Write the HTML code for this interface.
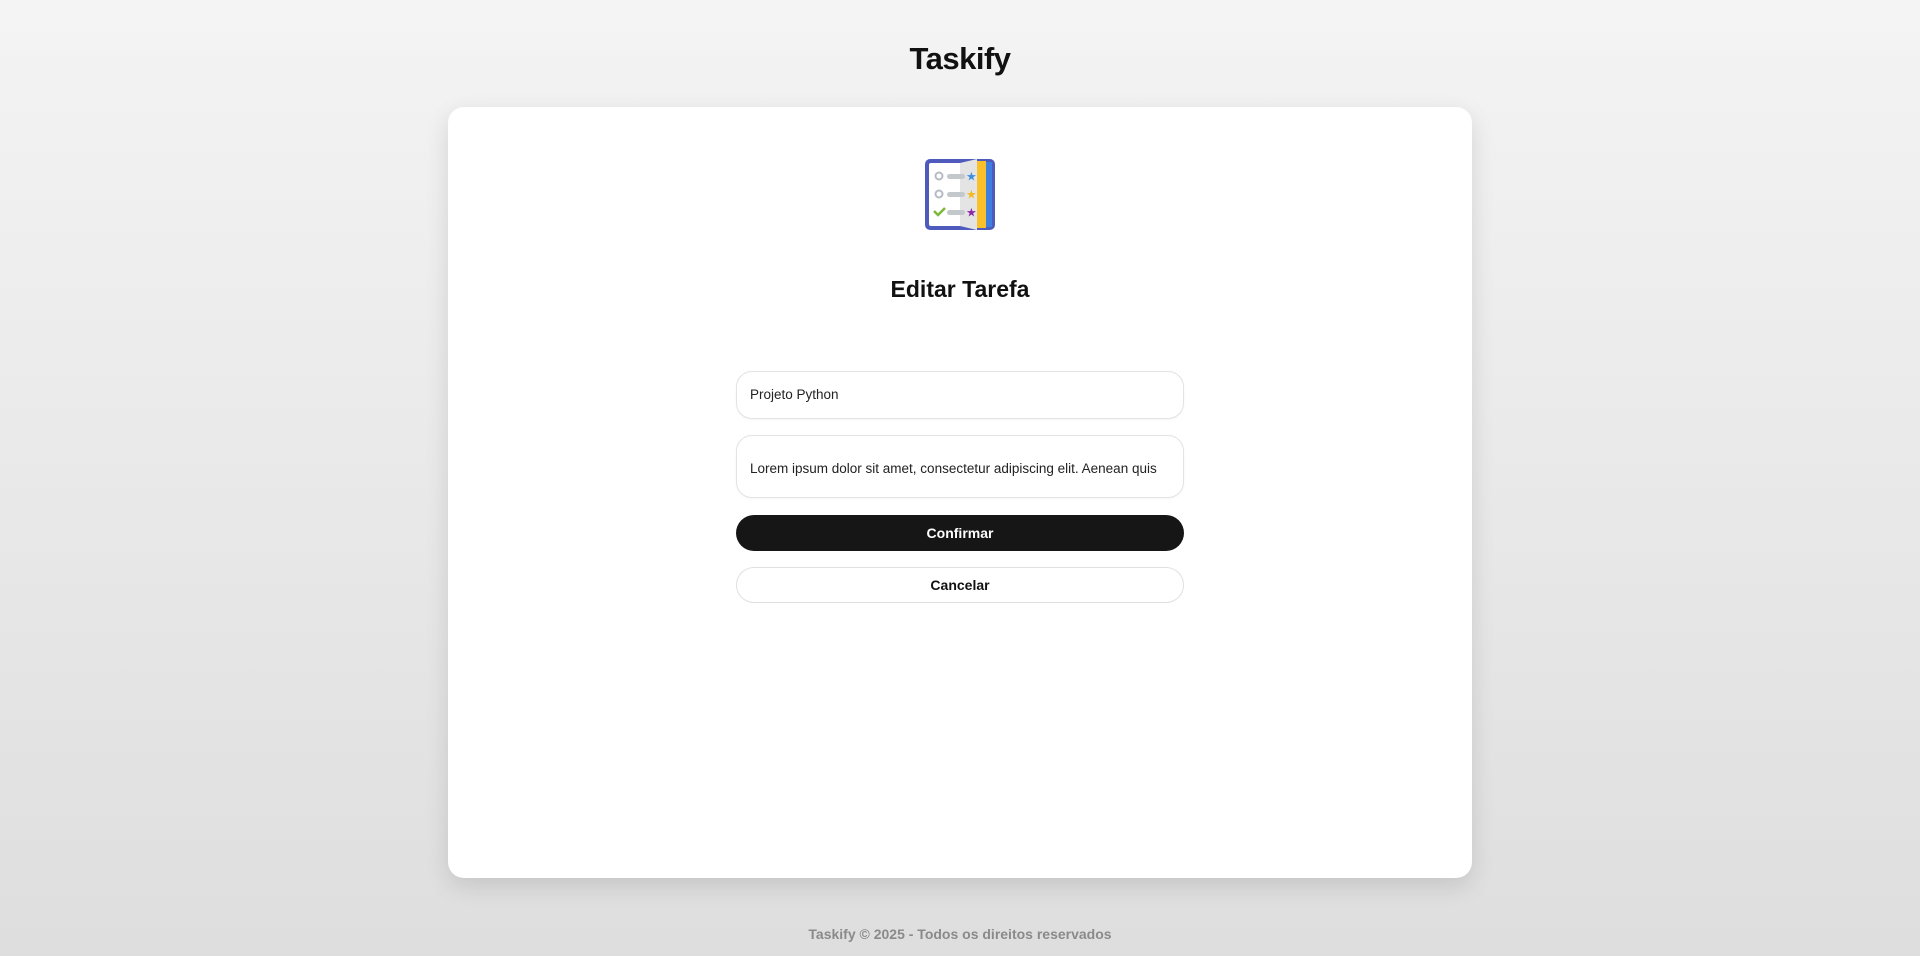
<!DOCTYPE html>
<html><head><meta charset="utf-8"><style>
html,body{margin:0;height:956px;overflow:hidden}
body{background:linear-gradient(#f4f4f4,#dedede);font-family:"Liberation Sans",sans-serif;position:relative;width:1920px}
.title{position:absolute;top:41px;left:0;width:1920px;text-align:center;font-size:31px;font-weight:bold;color:#111;letter-spacing:-0.5px}
.card{position:absolute;left:448px;top:107px;width:1024px;height:771px;background:#fff;border-radius:16px;box-shadow:0 8px 24px rgba(0,0,0,.12)}
.h{position:absolute;top:276px;left:0;width:1920px;text-align:center;font-size:23px;font-weight:bold;color:#111}
.in{position:absolute;left:736px;width:448px;box-sizing:border-box;border:1px solid #e3e3e3;border-radius:16px;background:#fff;font-size:13.5px;color:#222;padding-left:13px;box-shadow:0 1px 2px rgba(0,0,0,.04)}
.btn{position:absolute;left:736px;width:448px;height:36px;box-sizing:border-box;border-radius:18px;text-align:center;line-height:36px;font-size:14px;font-weight:bold}
.foot{position:absolute;top:926px;left:0;width:1920px;text-align:center;font-size:14px;font-weight:bold;color:#8a8a8a}
</style></head><body>
<div class="title">Taskify</div>
<div class="card"></div>
<svg style="position:absolute;left:925px;top:159px" width="70" height="71" viewBox="0 0 70 71">
<rect x="0" y="0" width="70" height="71" rx="5" fill="#4e5bbd"/>
<rect x="4" y="4" width="54" height="63" rx="2" fill="#fff"/>
<path d="M35 4 L52 0 L52 71 L35 67 Z" fill="#e4e4e4"/>
<rect x="52" y="2" width="9" height="67" fill="#f9c02b"/>
<rect x="61" y="3" width="6" height="65" fill="#3f7de0"/>
<circle cx="14" cy="17" r="3.5" fill="none" stroke="#b5bcc4" stroke-width="2"/>
<circle cx="14" cy="35" r="3.5" fill="none" stroke="#b5bcc4" stroke-width="2"/>
<path d="M9 52 l4 4 l7 -7" fill="none" stroke="#7cb83a" stroke-width="2.5"/>
<rect x="22" y="15" width="18" height="5" rx="2.5" fill="#c3c8cd"/>
<rect x="22" y="33" width="18" height="5" rx="2.5" fill="#c3c8cd"/>
<rect x="22" y="51" width="18" height="5" rx="2.5" fill="#c3c8cd"/>
<text x="41" y="21.5" font-size="12" fill="#3f8de0">★</text>
<text x="41" y="39.5" font-size="12" fill="#f3b81f">★</text>
<text x="41" y="57.5" font-size="12" fill="#8a2aa8">★</text>
</svg>
<div class="h">Editar Tarefa</div>
<div class="in" style="top:371px;height:48px;line-height:46px">Projeto Python</div>
<div class="in" style="top:435px;height:63px;line-height:66px">Lorem ipsum dolor sit amet, consectetur adipiscing elit. Aenean quis</div>
<div class="btn" style="top:515px;background:#161616;color:#fff">Confirmar</div>
<div class="btn" style="top:567px;background:#fff;color:#111;border:1px solid #e0e0e0;line-height:34px">Cancelar</div>
<div class="foot">Taskify © 2025 - Todos os direitos reservados</div>
</body></html>
